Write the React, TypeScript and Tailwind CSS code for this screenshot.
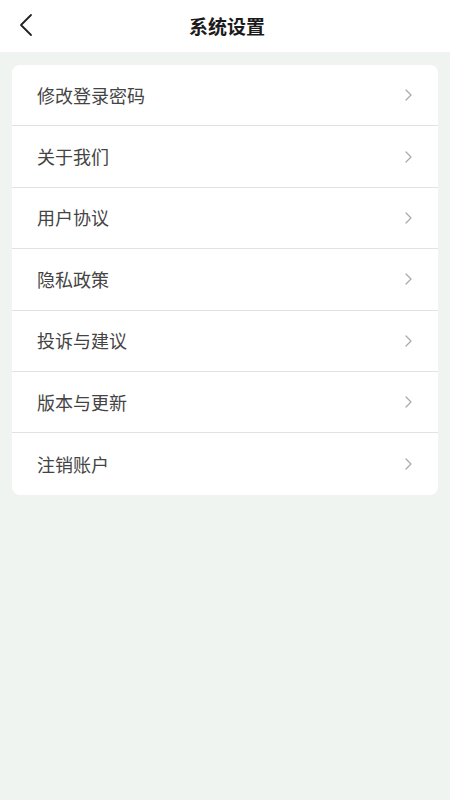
import React from "react";

const items = [
  "修改登录密码",
  "关于我们",
  "用户协议",
  "隐私政策",
  "投诉与建议",
  "版本与更新",
  "注销账户",
];

const Chevron = () => (
  <svg width="9" height="14" viewBox="0 0 9 14" fill="none">
    <path d="M2 2L7 7L2 12" stroke="#a8a8a8" strokeWidth="1.2" strokeLinecap="round" strokeLinejoin="round" />
  </svg>
);

export default function App() {
  return (
    <div
      className="flex min-h-[800px] w-[450px] flex-col bg-[#eff4f0]"
      style={{ fontFamily: '"Noto Sans CJK SC", "Noto Sans", sans-serif' }}
    >
      <div className="relative flex h-[52px] items-center justify-center bg-white">
        <button className="absolute left-[14px] top-[9px] p-1">
          <svg width="16" height="24" viewBox="0 0 16 24" fill="none">
            <path d="M13 2L3 12L13 22" stroke="#222" strokeWidth="1.8" strokeLinecap="round" strokeLinejoin="round" />
          </svg>
        </button>
        <h1 className="ml-[4px] text-[19px] font-bold text-[#1a1a1a]">系统设置</h1>
      </div>
      <div className="mx-3 mt-[13px] overflow-hidden rounded-lg bg-white">
        {items.map((label, i) => (
          <div
            key={label}
            className={`flex h-[61.4px] items-center justify-between pl-[25px] pr-[25px] ${
              i < items.length - 1 ? "border-b border-[#e2e2e2]" : ""
            }`}
          >
            <span className="text-[18px] text-[#444]">{label}</span>
            <Chevron />
          </div>
        ))}
      </div>
    </div>
  );
}
